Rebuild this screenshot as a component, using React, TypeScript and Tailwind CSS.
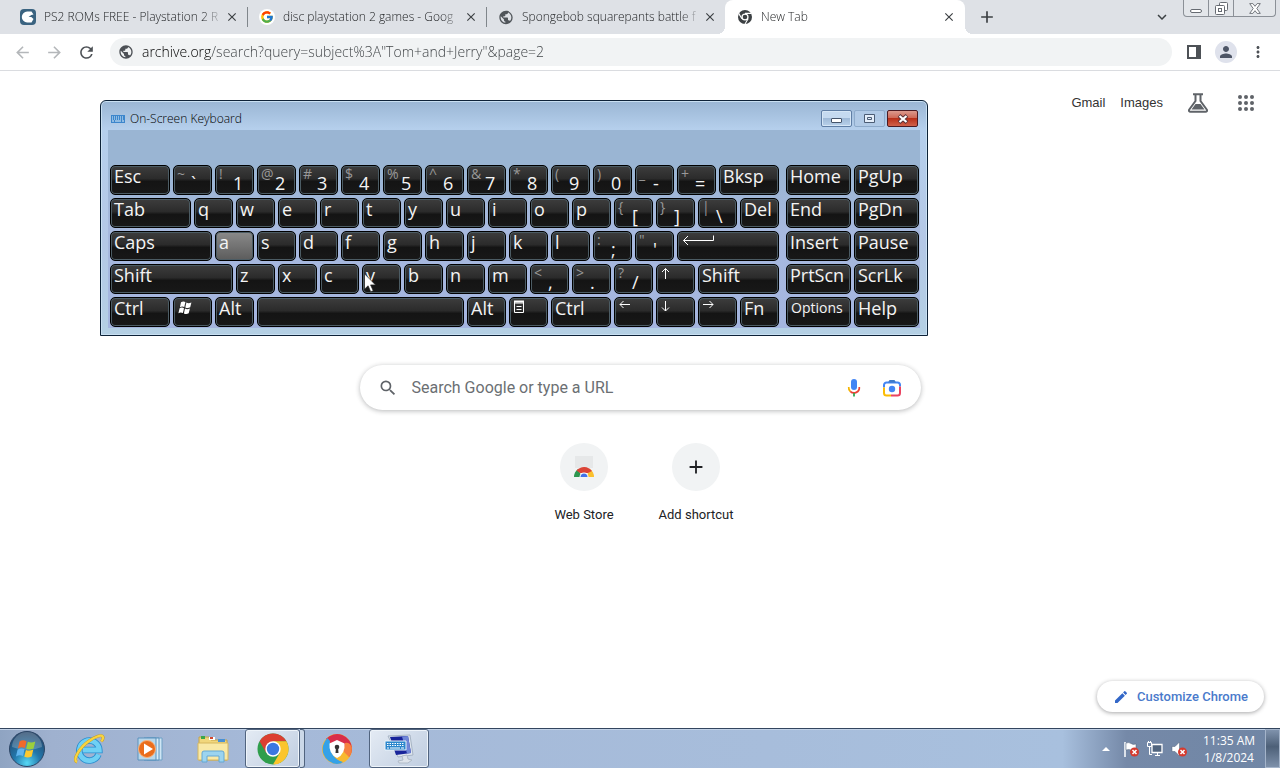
import type { ReactNode } from 'react';
import { FcGoogle } from 'react-icons/fc';
import {
  MdAdd,
  MdArrowBack,
  MdArrowForward,
  MdClose,
  MdEdit,
  MdExpandMore,
  MdMoreVert,
  MdPerson,
  MdPublic,
  MdRefresh,
  MdSearch,
} from 'react-icons/md';

interface TabProps {
  title: string;
  icon: ReactNode;
  active?: boolean;
  separator?: boolean;
}

interface KeyData {
  label?: string;
  shifted?: string;
  icon?: ReactNode;
  name?: string;
  span?: string;
  pressed?: boolean;
  small?: boolean;
}

function ChromeMono() {
  return (
    <svg viewBox="0 0 16 16" className="size-4">
      <circle cx="8" cy="8" r="7" fill="#3c4043" />
      <circle cx="8" cy="8" r="3.6" fill="#fff" />
      <circle cx="8" cy="8" r="2.3" fill="#3c4043" />
      <path d="M8 4.4h6.4M4.9 9.8 1.7 4.4M11.1 9.8 7.9 15.2" stroke="#fff" strokeWidth="1.1" />
    </svg>
  );
}

function SiteIcon() {
  return (
    <svg viewBox="0 0 16 16" className="size-4">
      <rect width="16" height="16" rx="4" fill="#3a6380" />
      <path d="M11.5 2.6H7.2a5.4 5.4 0 0 0 0 10.8h4.3l2-3.4-2.2-2H8.6l2.7-2 2.2-.6z" fill="#fff" />
    </svg>
  );
}

function Tab({ title, icon, active, separator }: TabProps) {
  return (
    <div
      className={
        active
          ? "relative flex h-full w-[240px] items-center rounded-t-lg bg-white pl-3 pr-2 before:absolute before:bottom-0 before:-left-2 before:size-2 before:bg-[radial-gradient(circle_at_0_0,transparent_8px,white_8px)] after:absolute after:bottom-0 after:-right-2 after:size-2 after:bg-[radial-gradient(circle_at_100%_0,transparent_8px,white_8px)]"
          : '-mr-px flex h-full w-[240px] items-center pl-3'
      }
    >
      <span className="flex size-4 shrink-0 items-center justify-center">{icon}</span>
      <span className="ml-2 flex-1 overflow-hidden whitespace-nowrap text-xs font-light text-[#1c1e20] [mask-image:linear-gradient(90deg,#000_88%,transparent)]">
        {title}
      </span>
      <button aria-label={`Close ${title}`} className="flex size-4 items-center justify-center text-[#3c4043]">
        <MdClose size={14} />
      </button>
      {!active && <span className={separator ? 'ml-[7px] h-5 w-px bg-[#80868b]' : 'ml-2'} />}
    </div>
  );
}

function WindowsFlag() {
  return (
    <svg viewBox="0 0 16 16" className="size-4" fill="#fff">
      <path d="M4 2.2c1.6-1 3-1 4.4-.1L7.3 7C5.800 6.200 4.400 6.300 2.900 7.200zM9.400 2.600c1.500.8 3 .8 5-.2L13.200 7.200c-1.600.9-3.200 1-4.900.2zM2.600 8.300c1.500-.9 3-.9 4.400-.1L5.900 13c-1.500-.9-2.900-.8-4.500.2zM8 8.600c1.600.8 3.200.7 4.900-.2l-1.200 4.900c-1.700.9-3.200.9-4.800.1z" />
    </svg>
  );
}

function Arrow({ d }: { d: string }) {
  return (
    <svg viewBox="0 0 12 12" className="size-3" fill="none" stroke="#fff">
      <path d={d} />
    </svg>
  );
}

const menuIcon = (
  <svg viewBox="0 0 12 14" className="h-3.5 w-3" fill="none" stroke="#fff">
    <path d="M1.500 1.500h9v11h-9zM1 3h10M3.500 6.500h5M3.500 9.500h5" />
    <path d="M1 1.500h10" strokeWidth="2" />
  </svg>
);

const enterIcon = (
  <svg viewBox="0 0 36 14" className="h-3.5 w-9" fill="none" stroke="#fff">
    <path d="M2.500 6.500h30v-5M7 2 2.500 6.500 7 11" />
  </svg>
);

const mainKeys: KeyData[] = [
  { label: 'Esc', span: 'col-span-3' },
  { label: '`', shifted: '~' },
  { label: '1', shifted: '!' },
  { label: '2', shifted: '@' },
  { label: '3', shifted: '#' },
  { label: '4', shifted: '$' },
  { label: '5', shifted: '%' },
  { label: '6', shifted: '^' },
  { label: '7', shifted: '&' },
  { label: '8', shifted: '*' },
  { label: '9', shifted: '(' },
  { label: '0', shifted: ')' },
  { label: '-', shifted: '_' },
  { label: '=', shifted: '+' },
  { label: 'Bksp', span: 'col-span-3' },

  { label: 'Tab', span: 'col-span-4' },
  { label: 'q' },
  { label: 'w' },
  { label: 'e' },
  { label: 'r' },
  { label: 't' },
  { label: 'y' },
  { label: 'u' },
  { label: 'i' },
  { label: 'o' },
  { label: 'p' },
  { label: '[', shifted: '{' },
  { label: ']', shifted: '}' },
  { label: '\\', shifted: '|' },
  { label: 'Del' },

  { label: 'Caps', span: 'col-span-5' },
  { label: 'a', pressed: true },
  { label: 's' },
  { label: 'd' },
  { label: 'f' },
  { label: 'g' },
  { label: 'h' },
  { label: 'j' },
  { label: 'k' },
  { label: 'l' },
  { label: ';', shifted: ':' },
  { label: "'", shifted: '"' },
  { icon: enterIcon, name: 'Enter', span: 'col-span-5' },

  { label: 'Shift', span: 'col-span-6' },
  { label: 'z' },
  { label: 'x' },
  { label: 'c' },
  { label: 'v' },
  { label: 'b' },
  { label: 'n' },
  { label: 'm' },
  { label: ',', shifted: '<' },
  { label: '.', shifted: '>' },
  { label: '/', shifted: '?' },
  { icon: <Arrow d="M5.500 12V1.500M2 5l3.500-3.500L9 5" />, name: 'Up' },
  { label: 'Shift', span: 'col-span-4' },

  { label: 'Ctrl', span: 'col-span-3' },
  { icon: <WindowsFlag />, name: 'Windows' },
  { label: 'Alt' },
  { name: 'Space', span: 'col-span-10' },
  { label: 'Alt' },
  { icon: menuIcon, name: 'Menu' },
  { label: 'Ctrl', span: 'col-span-3' },
  { icon: <Arrow d="M12 4.500H2M5.500 1 2 4.500 5.500 8" />, name: 'Left' },
  { icon: <Arrow d="M5.500 1v10M2 7.500 5.500 11 9 7.500" />, name: 'Down' },
  { icon: <Arrow d="M1 4.500h10M7.500 1 11 4.500 7.500 8" />, name: 'Right' },
  { label: 'Fn' },
];

const navKeys: KeyData[] = [
  { label: 'Home' },
  { label: 'PgUp' },
  { label: 'End' },
  { label: 'PgDn' },
  { label: 'Insert' },
  { label: 'Pause' },
  { label: 'PrtScn' },
  { label: 'ScrLk' },
  { label: 'Options', small: true },
  { label: 'Help' },
];

function Key({ label, shifted, icon, name, span = 'col-span-2', pressed, small }: KeyData) {
  const tone = pressed
    ? 'bg-[linear-gradient(#8a8a8a,#5c5c5c)]'
    : 'bg-[linear-gradient(#3d3d3d,#2b2b2b_45%,#141414_55%,#181818)]';
  return (
    <button
      aria-label={name}
      className={`flex h-[30px] items-start overflow-hidden rounded-[5px] border border-black px-[3px] text-lg leading-5 text-[#f4f4f4] shadow-[inset_0_0_0_1px_#4c5c64] ${span} ${tone}`}
    >
      {shifted && <span className="w-3.5 shrink-0 text-left text-sm leading-4 text-[#999]">{shifted}</span>}
      {shifted && <span className="mt-[7px]">{label}</span>}
      {!shifted && label && <span className={small ? 'pl-px text-sm leading-5' : ''}>{label}</span>}
      {icon && <span className="mt-0.5">{icon}</span>}
    </button>
  );
}

function OnScreenKeyboard() {
  return (
    <section
      aria-label="On-Screen Keyboard"
      className="absolute left-[100px] top-[29px] w-[828px] rounded-t-md border border-[#0d2238] bg-[linear-gradient(#9ab6d4,#b5cfec_28px,#b4c8e6_60%,#b4d0e4)] px-[7px] pb-[7px] shadow-[inset_0_0_0_1px_#c9e0f2]"
    >
      <div className="flex h-[29px] items-center pl-[3px] pr-0.5 pt-1.5">
        <svg viewBox="0 0 14 8" className="mr-[5px] h-2 w-3.5">
          <rect width="14" height="8" fill="#3c86cc" />
          <path d="M1 2h12M1 4h12" stroke="#e2f1fb" strokeDasharray="1 1" />
          <path d="M1 6h2m1 0h6m1 0h2" stroke="#e2f1fb" />
        </svg>
        <h2 className="flex-1 text-xs font-light text-black">On-Screen Keyboard</h2>
        <div className="flex gap-0.5">
          <button aria-label="Minimize" className="flex h-[17px] w-[31px] items-center justify-center rounded-xs border border-[#5f7ea5] bg-[linear-gradient(#c5daf0_45%,#9fbad8_50%,#b9d1ea)] shadow-[inset_0_0_0_1px_#d5e6f6]">
            <span className="mt-1 h-[5px] w-[11px] rounded-[1px] border border-[#44546a] bg-white" />
          </button>
          <button aria-label="Maximize" disabled className="flex h-[17px] w-[31px] items-center justify-center rounded-xs border border-[#8eabcb] bg-[#b1cae6]">
            <svg viewBox="0 0 11 9" className="h-[9px] w-[11px]" fill="#e4eefa" stroke="#4b5c74">
              <path d="M.5.5h10v8H.5zM3.500 3.500h4v2h-4z" />
            </svg>
          </button>
          <button aria-label="Close" className="flex h-[17px] w-[31px] items-center justify-center rounded-xs border border-[#4b1a22] bg-[linear-gradient(#dc9a8e,#cf6a58_45%,#b9301a_50%,#d0614a)]">
            <svg viewBox="0 0 12 10" className="h-2.5 w-3">
              <path d="m2 1.500 8 7M10 1.500l-8 7" stroke="#5a3238" strokeWidth="4" />
              <path d="m2.500 2 7 6M9.500 2l-7 6" stroke="#fff" strokeWidth="2.200" />
            </svg>
          </button>
        </div>
      </div>
      <div className="flex gap-[7px] bg-[linear-gradient(#9ab5d3_20%,#a7b9de_50%,#a4b5df)] pb-px pl-0.5 pr-px pt-[35px]">
        <div className="grid flex-1 grid-cols-[repeat(32,minmax(0,1fr))] gap-[3px]">
          {mainKeys.map((key, i) => (
            <Key key={i} {...key} />
          ))}
        </div>
        <div className="grid w-[133px] grid-cols-4 gap-[3px]">
          {navKeys.map((key) => (
            <Key key={key.label} {...key} />
          ))}
        </div>
      </div>
      {/* Mouse pointer */}
      <svg viewBox="0 0 12 20" className="absolute left-[263px] top-[172px] h-5 w-3">
        <path d="M.5.8v15.400l3.600-3.400 2.600 6 2.500-1.100-2.600-5.800h4.900z" fill="#fff" stroke="#222" strokeWidth=".7" />
      </svg>
    </section>
  );
}

function BrowserTop() {
  return (
    <header>
      <div className="flex h-[34px] items-center bg-[#dee1e6] pl-2">
        <Tab title="PS2 ROMs FREE - Playstation 2 R" icon={<SiteIcon />} separator />
        <Tab
          title="disc playstation 2 games - Goog"
          icon={
            <span className="rounded-full bg-white p-px">
              <FcGoogle size={14} />
            </span>
          }
          separator
        />
        <Tab title="Spongebob squarepants battle f" icon={<MdPublic size={17} color="#50555a" />} />
        <Tab title="New Tab" icon={<ChromeMono />} active />
        <button aria-label="New tab" className="ml-3 text-[#3c4043]">
          <MdAdd size={20} />
        </button>
        <button aria-label="Search tabs" className="ml-auto text-[#3c4043]">
          <MdExpandMore size={18} />
        </button>
        <div className="ml-3 mr-1 flex h-[17px] self-start rounded-b border border-t-0 border-[#8b9097] bg-[#e3e6ea]">
          <button aria-label="Minimize window" className="flex w-[25px] items-center justify-center border-r border-[#8b9097]">
            <span className="mt-[5px] h-1 w-3 rounded-xs border border-[#666b72] bg-white" />
          </button>
          <button aria-label="Restore window" className="flex w-[25px] items-center justify-center border-r border-[#8b9097]">
            <svg viewBox="0 0 13 13" className="size-[13px]" fill="#fff" stroke="#666b72">
              <rect x="4.500" y=".5" width="8" height="8" rx="1" />
              <rect x=".5" y="3.500" width="9" height="9" rx="1" />
              <rect x="3.500" y="6.500" width="3" height="3" />
            </svg>
          </button>
          <button aria-label="Close window" className="flex w-[41px] items-center justify-center">
            <svg viewBox="0 0 12 11" className="h-[11px] w-3" fill="#fff" stroke="#666b72" strokeWidth=".9">
              <path d="M.7.6h3.200L6 3.300 8.100.6h3.200L7.800 5.500l3.500 4.900H8.100L6 7.700l-2.100 2.700H.7l3.500-4.900z" />
            </svg>
          </button>
        </div>
      </div>
      <div className="flex h-[37px] items-center border-b border-[#dadce0] bg-white px-[13px]">
        <button aria-label="Back" disabled className="text-[#b4b7ba]">
          <MdArrowBack size={19} />
        </button>
        <button aria-label="Forward" disabled className="ml-[13px] text-[#b4b7ba]">
          <MdArrowForward size={19} />
        </button>
        <button aria-label="Reload" className="ml-[13px] text-[#4d5156]">
          <MdRefresh size={19} />
        </button>
        <label className="ml-3.5 flex h-7 flex-1 items-center rounded-full bg-[#f1f3f4] pl-2">
          <MdPublic size={16} color="#4d5156" />
          <input
            aria-label="Address and search bar"
            defaultValue={'archive.org/search?query=subject%3A"Tom+and+Jerry"&page=2'}
            className="ml-2 flex-1 bg-[linear-gradient(90deg,#000_69px,#3c4043_69px)] bg-clip-text text-sm font-light text-transparent outline-none"
          />
        </label>
        <button aria-label="Side panel" className="ml-[15px]">
          <svg viewBox="0 0 14 14" className="size-3.5">
            <path d="M1 1h12v12H1z" fill="#fff" stroke="#4d5156" strokeWidth="2" />
            <path d="M9 1h4v12H9z" fill="#4d5156" />
          </svg>
        </button>
        <button aria-label="Profile" className="ml-3.5 flex size-[22px] items-center justify-center rounded-full bg-[#dfe2ec] text-[#4d5566]">
          <MdPerson size={18} />
        </button>
        <button aria-label="Chrome menu" className="ml-3 text-[#4d5156]">
          <MdMoreVert size={18} />
        </button>
      </div>
    </header>
  );
}

function NewTabPage() {
  return (
    <main className="relative flex flex-1 flex-col bg-white">
      <nav className="flex h-16 items-center justify-end pr-[26px] font-['Liberation_Sans',sans-serif] text-[13px] text-[#333]">
        <a href="#gmail">Gmail</a>
        <a href="#images" className="ml-[15px]">
          Images
        </a>
        <button aria-label="Search labs" className="ml-[25px]">
          <svg viewBox="0 0 20 20" className="size-5" fill="none" stroke="#5f6368" strokeWidth="2">
            <path d="M5 1.200h10M7.500 1v7L1.300 16.500c-.8 1.300-.2 2.300 1.200 2.300h15c1.400 0 2-1 1.200-2.300L12.500 8V1" />
            <path d="M7.500 11h5l4 5.500h-13z" fill="#5f6368" stroke="none" />
          </svg>
        </button>
        <button aria-label="Google apps" className="ml-[30px]">
          <svg viewBox="0 0 16 16" className="size-4" fill="#5f6368">
            {[2, 8, 14].map((y) => [2, 8, 14].map((x) => <circle key={`${x}-${y}`} cx={x} cy={y} r="2" />))}
          </svg>
        </button>
      </nav>

      <div className="mt-[230px] flex flex-col items-center font-[Roboto,sans-serif]">
        <label className="flex h-[45px] w-full max-w-[561px] items-center rounded-full bg-white pl-[18px] pr-[19px] shadow-[0_1px_5px_rgba(32,33,36,0.32)]">
          <MdSearch size={20} color="#5f6368" />
          <input
            aria-label="Search"
            placeholder="Search Google or type a URL"
            className="ml-3.5 flex-1 outline-none placeholder:text-[#6b6f73]"
          />
          <button aria-label="Search by voice">
            <svg viewBox="0 0 20 20" className="size-5">
              <rect x="7" y="1" width="6" height="11" rx="3" fill="#4285f4" />
              <path d="M4.700 9a5.300 5.300 0 0 0 1.550 4.300" stroke="#f4b400" strokeWidth="1.700" fill="none" />
              <path d="M6.250 13.300A5.300 5.300 0 0 0 15.300 9" stroke="#ea4335" strokeWidth="1.700" fill="none" />
              <path d="M10 15v3.500" stroke="#34a853" strokeWidth="1.800" />
            </svg>
          </button>
          <button aria-label="Search by image" className="ml-[18px]">
            <svg viewBox="0 0 20 20" className="size-5" fill="none" strokeWidth="2">
              <path d="M2 9.500V7a2.500 2.500 0 0 1 2.500-2.500h11A2.500 2.500 0 0 1 18 7v1.500" stroke="#4285f4" />
              <path d="M6 4.500 7.500 2h5L14 4.500z" fill="#3f7ac8" />
              <path d="M2 9.500V15a2.500 2.500 0 0 0 2.500 2.500H9" stroke="#fbbc04" />
              <path d="M9 17.500h6.500A2.500 2.500 0 0 0 18 15V8.500" stroke="#ea4360" />
              <circle cx="10" cy="11" r="3.200" fill="#4285f4" />
            </svg>
          </button>
        </label>

        <div className="mt-[33px] flex text-[13px] text-[#202124]">
          <a href="#webstore" className="flex w-28 flex-col items-center">
            <span className="flex size-12 items-center justify-center rounded-full bg-[#f1f3f4]">
              <svg viewBox="0 0 20 24" className="h-6 w-5">
                <path d="M1 1h18v12H1z" fill="#e6e8e9" />
                <path d="M0 22a10 10 0 0 1 4-8l4 8z" fill="#2e9650" />
                <path d="M20 22a10 10 0 0 0-4-8l-4 8z" fill="#fbc02d" />
                <path d="M2.500 15.500a10 10 0 0 1 15.500.5l-4 2H6z" fill="#db4437" />
                <path d="M5.500 22a4.500 4.500 0 0 1 9 0z" fill="#fff" />
                <path d="M6.500 22a3.500 3.500 0 0 1 7 0z" fill="#4272e8" />
              </svg>
            </span>
            <span className="mt-3.5">Web Store</span>
          </a>
          <button className="flex w-28 flex-col items-center">
            <span className="flex size-12 items-center justify-center rounded-full bg-[#f1f3f4]">
              <MdAdd size={22} />
            </span>
            <span className="mt-3.5">Add shortcut</span>
          </button>
        </div>
      </div>

      <button className="absolute bottom-4 right-4 flex h-[31px] items-center gap-2 rounded-full bg-white px-4 font-[Roboto,sans-serif] text-[13px] font-medium text-[#4a7acb] shadow-[0_1px_4px_rgba(32,33,36,0.4)]">
        <MdEdit size={16} color="#3367c8" />
        Customize Chrome
      </button>

      <OnScreenKeyboard />
    </main>
  );
}

function StartOrb() {
  return (
    <svg viewBox="0 0 38 38" className="size-[38px]">
      <defs>
        <radialGradient id="orb" cx=".5" cy=".9" r=".85">
          <stop offset="0" stopColor="#56d8f5" />
          <stop offset=".45" stopColor="#2277ab" />
          <stop offset="1" stopColor="#24476c" />
        </radialGradient>
      </defs>
      <circle cx="19" cy="19" r="17.500" fill="url(#orb)" stroke="#2c4565" />
      <path d="M4 17A15 15 0 0 1 34 17Q19 23 4 17z" fill="#fff" opacity=".22" />
      <path d="M11.500 11.500c2.500-1.600 4.800-1.500 7-.3l-1.600 6.900c-2.300-1.100-4.600-1-7 .4z" fill="#f06a2c" />
      <path d="M19.800 11.800c2.300 1.200 4.900 1 7.500-.3l-1.700 6.900c-2.500 1.300-5 1.400-7.400.3z" fill="#9bcf3d" />
      <path d="M9.600 19.600c2.400-1.400 4.700-1.500 7-.4L15 26c-2.300-1.200-4.600-1-7 .5z" fill="#5fb4ee" />
      <path d="M17.900 19.900c2.400 1.100 4.900.9 7.400-.4l-1.600 6.900c-2.500 1.300-5 1.400-7.400.3z" fill="#fdc92f" />
    </svg>
  );
}

function ExplorerE() {
  return (
    <svg viewBox="0 0 32 32" className="size-8" fill="none">
      <path d="M25.500 21.500a10 10 0 1 1 .8-4.500H10" stroke="#2a8fd0" strokeWidth="6.500" />
      <path d="M25.500 21.500a10 10 0 1 1 .8-4.500H10" stroke="#6fd0f4" strokeWidth="4.800" />
      <path d="M4 29c-5-2 3-15 12-21C22 3.500 29 1 30 4c.5 1.500-.5 3-1.500 4.500" stroke="#c79a1c" strokeWidth="3" />
      <path d="M4 29c-5-2 3-15 12-21C22 3.500 29 1 30 4c.5 1.500-.5 3-1.500 4.500" stroke="#f8d440" strokeWidth="2.200" />
    </svg>
  );
}

function MediaPlayer() {
  return (
    <svg viewBox="0 0 30 28" className="h-7 w-[30px]">
      <path d="M11 3h15v22H11z" fill="#cfe6f4" stroke="#6ea1c6" />
      <path d="M8 3h15v22H8z" fill="#d9edf8" stroke="#5a92bd" />
      <path d="M2 3h18v22H2z" fill="#b8d7ea" stroke="#5a92bd" />
      <circle cx="11" cy="14" r="8.500" fill="#ea6d1c" stroke="#f7b27c" />
      <path d="m8 8.500 9 5.500-9 5.500z" fill="#fff" />
    </svg>
  );
}

function FolderIcon() {
  return (
    <svg viewBox="0 0 34 30" className="h-[30px] w-[34px]">
      <path d="M3 3h10l2 3h16v20H3z" fill="#f1d77c" stroke="#c6a448" />
      <path d="M5 2h4v3H5z" fill="#3aa64a" />
      <path d="M13 3h6v3h-6z" fill="#fff" />
      <path d="M14 3h3v2h-3z" fill="#d3472f" />
      <path d="M22 5h7v3h-7z" fill="#4a91d4" />
      <path d="M2 9h30v17H2z" fill="#f9e9a6" stroke="#d6b75e" />
      <path d="M6 28v-9q0-2 2-2h18q2 0 2 2v9h-5v-6H11v6z" fill="#9bd4ef" stroke="#64a8d4" />
    </svg>
  );
}

function ChromeLogo() {
  return (
    <svg viewBox="0 0 32 32" className="size-8">
      <circle cx="16" cy="16" r="15.500" fill="#2f9e4c" />
      <path d="M2.600 8.200A15.500 15.500 0 0 1 29.400 8.200L16 8.200 9.300 19.900z" fill="#dc3f31" />
      <path d="M16 8.200h13.400A15.500 15.500 0 0 1 16 31.500l6.800-11.600z" fill="#fbc52d" />
      <circle cx="16" cy="16" r="7.700" fill="#fff" />
      <circle cx="16" cy="16" r="6.200" fill="#3b78e0" />
    </svg>
  );
}

function SecureBrowser() {
  return (
    <svg viewBox="0 0 32 32" className="size-8">
      <circle cx="16" cy="16" r="15" fill="#f8b92f" />
      <path d="M16 16 5 5.800A15 15 0 0 1 31 15.500Q31 20 28 24 28 14 16 16z" fill="#d92e49" />
      <path d="M28 24Q31 20 31 15q-2-6-7-5l-2 8z" fill="#f6813f" />
      <path d="M6.500 5A15 15 0 0 0 16 31q4 0 6-2Q8 25 9 8z" fill="#34a1e8" />
      <path d="m16 7 7.500 3.500q1 10.500-7.500 14.500Q7.500 21 8.500 10.500z" fill="#fff" />
      <circle cx="16" cy="14" r="2.300" fill="#333" />
      <path d="M15 14h2l.5 6h-3z" fill="#333" />
    </svg>
  );
}

function KeyboardMonitor() {
  return (
    <svg viewBox="0 0 32 32" className="size-8">
      <path d="m5 3 22-1 3 20-15 2z" fill="#dfe6ee" stroke="#a7b4c4" />
      <path d="m7 4 18-1 3 17-15 2z" fill="#18249a" />
      <path d="m19 3.500 6-.5 3 17-4 .5z" fill="#6f86d8" />
      <path d="m19 23 5-1 1 4 4 1-4 3h-9l-1-2 5-1z" fill="#dde3ea" stroke="#b0bbc8" />
      <path d="M2 8h21v9H2z" fill="#2a86cc" stroke="#e8f4fb" />
      <path d="M4 10.500h17M4 12.500h17" stroke="#fff" strokeDasharray="1.500 1" />
      <path d="M4 15h2m1 0h10m1 0h3" stroke="#fff" />
    </svg>
  );
}

const taskbarApps = [
  { name: 'Internet Explorer', icon: <ExplorerE /> },
  { name: 'Windows Media Player', icon: <MediaPlayer /> },
  { name: 'Windows Explorer', icon: <FolderIcon /> },
  { name: 'Google Chrome', icon: <ChromeLogo />, open: true, stacked: true },
  { name: 'Secure Browser', icon: <SecureBrowser /> },
  { name: 'On-Screen Keyboard', icon: <KeyboardMonitor />, open: true },
];

const openStyle =
  'border border-[#51647f] bg-[linear-gradient(135deg,#e4ebf4,#bfcde0)] shadow-[inset_0_0_0_1px_#eef4fa]';

function CrossBadge() {
  return (
    <>
      <circle cx="11.500" cy="11" r="4.500" fill="#d53a2e" />
      <path d="m9.500 9 4 4m0-4-4 4" stroke="#fff" strokeWidth="1.500" />
    </>
  );
}

function Taskbar() {
  return (
    <footer className="flex h-10 items-stretch border-t border-[#33455e] bg-[linear-gradient(90deg,#8fa4c2,#9fb1cf_4%,#a5b9d8_20%,#a7bddb_60%,#a8c0de_83%,#7589a8_88%,#7086a5)] shadow-[inset_0_1px_0_#c3d3e8]">
      <button aria-label="Start" className="ml-2 flex w-[51px] items-center">
        <StartOrb />
      </button>
      <div className="flex gap-0.5">
        {taskbarApps.map((app) => (
          <button key={app.name} aria-label={app.name} className="flex w-[60px]">
            <span className={`flex h-full flex-1 items-center justify-center rounded-[3px] ${app.open ? openStyle : ''}`}>
              {app.icon}
            </span>
            {app.stacked && <span className="h-full w-[5px] rounded-r-[3px] border border-l-0 border-[#51647f] bg-[#cbd8e8]" />}
          </button>
        ))}
      </div>
      <div className="ml-auto flex items-center text-xs text-white">
        <button aria-label="Show hidden icons">
          <svg viewBox="0 0 8 4" className="h-1 w-2">
            <path d="M0 4 4 0l4 4z" fill="#fff" />
          </svg>
        </button>
        <button aria-label="Action Center" className="ml-[13px]">
          <svg viewBox="0 0 16 16" className="size-4">
            <path d="M2 1v15" stroke="#fff" strokeWidth="1.500" />
            <path d="M3 2q3-1 5 .5T13 3v6q-3 1-5 0t-5 0z" fill="#fff" stroke="#53637a" strokeWidth=".5" />
            <CrossBadge />
          </svg>
        </button>
        <button aria-label="Network" className="ml-2">
          <svg viewBox="0 0 16 16" className="size-4" fill="none" stroke="#fff">
            <path d="M5 3.500h10v8H5z" fill="#51657f" strokeWidth="1.300" />
            <path d="M8 14.500h5M10.500 12v2M.5 1.500h4v4h-4zM2.500 6v7.500H5" />
            <path d="M1.500 0v2m2-2v2" />
          </svg>
        </button>
        <button aria-label="Volume" className="ml-2">
          <svg viewBox="0 0 16 16" className="size-4">
            <path d="M1 5.500h3L8.500 1v14L4 10.500H1z" fill="#fff" stroke="#53637a" strokeWidth=".5" />
            <CrossBadge />
          </svg>
        </button>
        <div className="ml-4 w-[52px] text-center leading-[17px]">
          <div className="whitespace-nowrap">11:35 AM</div>
          <div>1/8/2024</div>
        </div>
        <button
          aria-label="Show desktop"
          className="ml-2.5 h-full w-[15px] border border-[#a4b4ca] bg-[linear-gradient(#7f92ac,#4d6078_45%,#7d90aa)]"
        />
      </div>
    </footer>
  );
}

export default function App() {
  return (
    <div className="flex min-h-screen flex-col font-['Open_Sans','Noto_Sans',sans-serif]">
      <BrowserTop />
      <NewTabPage />
      <Taskbar />
    </div>
  );
}
